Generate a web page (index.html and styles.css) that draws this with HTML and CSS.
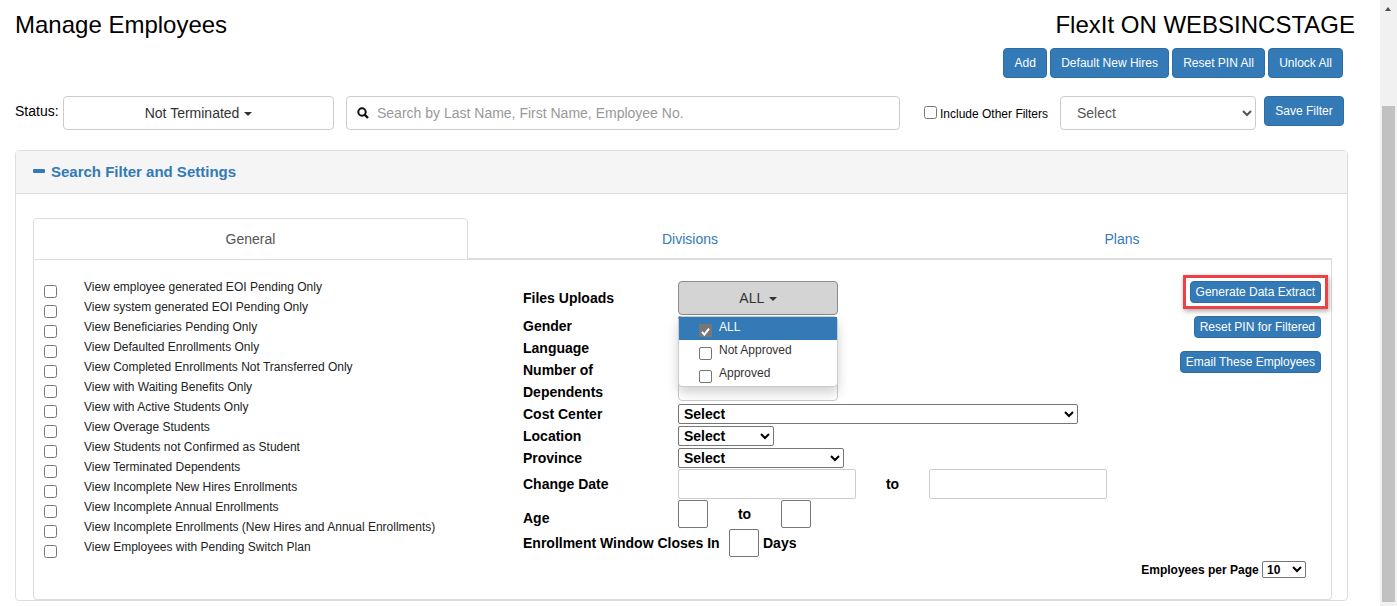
FILE: index.html
```html
<!DOCTYPE html>
<html lang="en">
<head>
    <meta charset="UTF-8">
    <title>Manage Employees</title>
    <link rel="stylesheet" href="styles.css">
</head>
<body>
    <div class="page">
        <div class="container">
            <div class="title-row">
                <h1>Manage Employees</h1>
                <h1>FlexIt ON WEBSINCSTAGE</h1>
            </div>
            <div class="action-row">
                <button class="btn">Add</button>
                <button class="btn">Default New Hires</button>
                <button class="btn">Reset PIN All</button>
                <button class="btn">Unlock All</button>
            </div>
            <div class="filter-row">
                <label class="status-label">Status:</label>
                <div class="status-toggle">Not Terminated <span class="caret"></span></div>
                <div class="search-box">
                    <svg class="search-icon" width="12" height="12" viewBox="0 0 12 12">
                        <circle cx="5" cy="5" r="3.7" fill="none" stroke="#111" stroke-width="2"/>
                        <path d="M7.6 7.6 L11 11" stroke="#111" stroke-width="2.4"/>
                    </svg>
                    <input class="search-input" type="text" placeholder="Search by Last Name, First Name, Employee No.">
                </div>
                <label class="include-label"><input type="checkbox"><span>Include Other Filters</span></label>
                <select class="saved-select"><option>Select</option></select>
                <button class="btn btn-save">Save Filter</button>
            </div>

            <div class="panel">
                <div class="panel-heading"><span class="minus"></span>Search Filter and Settings</div>
                <div class="panel-body">
                    <div class="tabs">
                        <div class="tab active">General</div>
                        <div class="tab">Divisions</div>
                        <div class="tab">Plans</div>
                    </div>
                    <div class="tab-content">
                        <div class="check-list">
                            <label class="check-row"><input type="checkbox"><span>View employee generated EOI Pending Only</span></label>
                            <label class="check-row"><input type="checkbox"><span>View system generated EOI Pending Only</span></label>
                            <label class="check-row"><input type="checkbox"><span>View Beneficiaries Pending Only</span></label>
                            <label class="check-row"><input type="checkbox"><span>View Defaulted Enrollments Only</span></label>
                            <label class="check-row"><input type="checkbox"><span>View Completed Enrollments Not Transferred Only</span></label>
                            <label class="check-row"><input type="checkbox"><span>View with Waiting Benefits Only</span></label>
                            <label class="check-row"><input type="checkbox"><span>View with Active Students Only</span></label>
                            <label class="check-row"><input type="checkbox"><span>View Overage Students</span></label>
                            <label class="check-row"><input type="checkbox"><span>View Students not Confirmed as Student</span></label>
                            <label class="check-row"><input type="checkbox"><span>View Terminated Dependents</span></label>
                            <label class="check-row"><input type="checkbox"><span>View Incomplete New Hires Enrollments</span></label>
                            <label class="check-row"><input type="checkbox"><span>View Incomplete Annual Enrollments</span></label>
                            <label class="check-row"><input type="checkbox"><span>View Incomplete Enrollments (New Hires and Annual Enrollments)</span></label>
                            <label class="check-row"><input type="checkbox"><span>View Employees with Pending Switch Plan</span></label>
                        </div>

                        <div class="form-col">
                            <div class="form-row row-files">
                                <span class="form-label">Files Uploads</span>
                                <div class="files-toggle">ALL <span class="caret"></span></div>
                                <div class="files-menu">
                                    <div class="menu-item selected"><span class="menu-check">
                                        <svg width="13" height="13" viewBox="0 0 13 13"><path d="M3 6.8 L5.4 9.6 L10 3.6" fill="none" stroke="#fff" stroke-width="2"/></svg>
                                    </span>ALL</div>
                                    <div class="menu-item"><span class="menu-check"></span>Not Approved</div>
                                    <div class="menu-item"><span class="menu-check"></span>Approved</div>
                                </div>
                            </div>
                            <div class="form-row"><span class="form-label">Gender</span><select class="small-select sel-short"><option>Select</option></select></div>
                            <div class="form-row"><span class="form-label">Language</span><select class="small-select sel-short"><option>Select</option></select></div>
                            <div class="form-row row-tall">
                                <span class="form-label">Number of<br>Dependents</span>
                                <input class="light-input dep-input" type="text">
                            </div>
                            <div class="form-row"><span class="form-label">Cost Center</span><select class="small-select sel-cost"><option>Select</option></select></div>
                            <div class="form-row"><span class="form-label">Location</span><select class="small-select sel-short"><option>Select</option></select></div>
                            <div class="form-row"><span class="form-label">Province</span><select class="small-select sel-prov"><option>Select</option></select></div>
                            <div class="form-row row-date">
                                <span class="form-label">Change Date</span>
                                <input class="light-input date-input" type="text">
                                <span class="to-date">to</span>
                                <input class="light-input date-input" type="text">
                            </div>
                            <div class="form-row row-age">
                                <span class="form-label age-label">Age</span>
                                <input class="box-input" type="text">
                                <span class="to-age">to</span>
                                <input class="box-input" type="text">
                            </div>
                            <div class="form-row row-window">
                                <span class="window-label">Enrollment Window Closes In</span>
                                <input class="box-input" type="text">
                                <span class="days">Days</span>
                            </div>
                        </div>

                        <div class="side-col">
                            <button class="btn btn-side highlight">Generate Data Extract</button>
                            <button class="btn btn-side">Reset PIN for Filtered</button>
                            <button class="btn btn-side">Email These Employees</button>
                            <div class="per-page">Employees per Page
                                <select class="page-select"><option>10</option></select>
                            </div>
                        </div>
                    </div>
                </div>
            </div>
        </div>

        <div class="scrollbar">
            <div class="scroll-arrow"></div>
            <div class="scroll-thumb"></div>
        </div>
    </div>
</body>
</html>
```

FILE: styles.css
```css
html, body {
    margin: 0;
    height: 606px;
    overflow: hidden;
}
body {
    font-family: "Liberation Sans", Arial, sans-serif;
    font-size: 14px;
    color: #000;
    background: #fff;
}
.page {
    display: flex;
    height: 606px;
}
.container {
    width: 1380px;
    flex: none;
    box-sizing: border-box;
    padding-left: 15px;
    overflow: hidden;
}
.title-row {
    display: flex;
    justify-content: space-between;
    height: 48px;
    padding-right: 25px;
}
h1 {
    margin: 0;
    font-size: 24px;
    font-weight: normal;
    line-height: 50px;
}
.btn {
    background: #337ab7;
    border: 1px solid #2e6da4;
    border-radius: 4px;
    color: #fff;
    font-family: inherit;
    font-size: 12px;
    padding: 0 10px;
    cursor: pointer;
}
.action-row {
    display: flex;
    justify-content: flex-end;
    gap: 3px;
    height: 30px;
    padding-right: 37px;
}
.action-row .btn {
    padding: 0 10.15px;
}
.filter-row {
    display: flex;
    align-items: flex-start;
    height: 34px;
    margin-top: 18px;
}
.status-label {
    width: 48px;
    line-height: 30px;
}
.status-toggle {
    width: 271px;
    height: 34px;
    box-sizing: border-box;
    border: 1px solid #ccc;
    border-radius: 4px;
    text-align: center;
    line-height: 33px;
    color: #333;
}
.caret {
    display: inline-block;
    width: 0;
    height: 0;
    margin-left: 1px;
    vertical-align: middle;
    border-top: 4px solid #333;
    border-left: 4px solid transparent;
    border-right: 4px solid transparent;
}
.search-box {
    display: flex;
    align-items: center;
    width: 554px;
    height: 34px;
    box-sizing: border-box;
    margin-left: 12px;
    padding-left: 10px;
    border: 1px solid #ccc;
    border-radius: 4px;
}
.search-input {
    flex: 1;
    margin-left: 8px;
    border: none;
    outline: none;
    font-family: inherit;
    font-size: 14px;
    padding: 0;
}
.search-input::placeholder {
    color: #999;
}
.include-label {
    display: flex;
    align-items: flex-start;
    width: 136px;
    margin-left: 24px;
    font-size: 12px;
    color: #000;
}
.include-label input {
    margin: 10px 3px 0 0;
}
.include-label span {
    margin-top: 11px;
}
.saved-select {
    width: 196px;
    height: 34px;
    padding: 0 12px;
    background: #fff;
    border: 1px solid #ccc;
    border-radius: 4px;
    color: #555;
    font-family: inherit;
    font-size: 14px;
}
.btn-save {
    width: 80px;
    height: 30px;
    margin-left: 8px;
    padding: 0;
}
.panel {
    width: 1333px;
    box-sizing: border-box;
    margin-top: 20px;
    border: 1px solid #ddd;
    border-radius: 4px;
}
.panel-heading {
    display: flex;
    align-items: center;
    height: 40px;
    padding: 0 0 2px 17px;
    background: #f5f5f5;
    border-bottom: 1px solid #ddd;
    color: #337ab7;
    font-size: 15px;
    font-weight: bold;
}
.minus {
    width: 12px;
    height: 4px;
    margin-right: 6px;
    background: #337ab7;
    border-radius: 1px;
}
.panel-body {
    padding: 24px 15px 0 17px;
}
.tabs {
    display: grid;
    grid-template-columns: 435px 444px 420px;
    height: 42px;
}
.tab {
    box-sizing: border-box;
    padding-top: 13px;
    text-align: center;
    color: #337ab7;
    border-bottom: 2px solid #ddd;
}
.tab.active {
    color: #555;
    border: 1px solid #ddd;
    border-radius: 4px 4px 0 0;
    padding-top: 12px;
}
.tab-content {
    display: flex;
    height: 340px;
    box-sizing: border-box;
    padding: 17px 10px 21px;
    border: 1px solid #ddd;
    border-top: none;
    border-radius: 0 0 4px 4px;
}
.check-list {
    width: 479px;
    flex: none;
}
.check-row {
    display: flex;
    align-items: flex-start;
    height: 20px;
    font-size: 12px;
    line-height: 20px;
    color: #222;
}
.check-row input {
    flex: none;
    margin: 8px 27px 0 0;
}
.form-col {
    width: 600px;
    flex: none;
    padding-top: 4px;
}
.form-row {
    position: relative;
    display: flex;
    align-items: center;
    height: 22px;
    font-weight: bold;
}
.form-label {
    width: 155px;
    flex: none;
    line-height: 22px;
}
.row-files {
    height: 34px;
}
.row-tall {
    height: 44px;
}
.row-date {
    height: 30px;
}
.row-age {
    height: 30px;
}
.row-window {
    height: 28px;
}
.files-toggle {
    width: 160px;
    height: 34px;
    box-sizing: border-box;
    background: #d4d4d4;
    border: 1px solid #8c8c8c;
    border-radius: 4px;
    text-align: center;
    line-height: 32px;
    font-weight: normal;
    color: #333;
}
.files-menu {
    position: absolute;
    top: 35px;
    left: 155px;
    z-index: 5;
    width: 160px;
    height: 71px;
    box-sizing: border-box;
    background: #fff;
    border: 1px solid #ccc;
    border-radius: 4px;
    box-shadow: 0 6px 12px rgba(0, 0, 0, 0.175);
    font-weight: normal;
    font-size: 12px;
}
.menu-item {
    display: flex;
    align-items: flex-start;
    height: 23px;
    padding-left: 20px;
    line-height: 21px;
    color: #333;
}
.menu-item.selected {
    background: #337ab7;
    color: #fff;
}
.menu-check {
    width: 13px;
    height: 13px;
    box-sizing: border-box;
    margin: 7px 7px 0 0;
    background: #fff;
    border: 1px solid #767676;
    border-radius: 2px;
}
.selected .menu-check {
    background: #777;
    border: none;
    border-radius: 0;
}
.small-select {
    height: 20px;
    padding-left: 1px;
    background: #fff;
    border: 1px solid #767676;
    border-radius: 2px;
    font-family: inherit;
    font-size: 14px;
    font-weight: bold;
    color: #000;
}
.sel-short {
    width: 96px;
}
.sel-cost {
    width: 400px;
}
.sel-prov {
    width: 166px;
}
.light-input {
    box-sizing: border-box;
    border: 1px solid #ccc;
    border-radius: 2px;
    background: #fff;
}
.dep-input {
    width: 160px;
    height: 28px;
    margin-top: 12px;
    border-radius: 4px;
}
.date-input {
    width: 178px;
    height: 30px;
}
.to-date {
    width: 73px;
    text-align: center;
}
.box-input {
    width: 30px;
    height: 28px;
    box-sizing: border-box;
    background: #fff;
    border: 1px solid #767676;
    border-radius: 2px;
}
.age-label {
    margin-top: 8px;
}
.to-age {
    width: 73px;
    text-align: center;
}
.window-label {
    width: 206px;
    flex: none;
}
.days {
    margin-left: 4px;
}
.side-col {
    flex: 1;
    display: flex;
    flex-direction: column;
    align-items: flex-end;
    padding-top: 4px;
}
.btn-side {
    height: 22px;
    padding: 0 5px;
    margin-bottom: 13px;
}
.highlight {
    position: relative;
}
.highlight::after {
    content: "";
    position: absolute;
    top: -7px;
    right: -8px;
    bottom: -7px;
    left: -8px;
    border: 3px solid #ee4045;
    box-shadow: 1px 2px 5px rgba(0, 0, 0, 0.35);
}
.per-page {
    margin-top: auto;
    margin-right: 15px;
    font-size: 12px;
    font-weight: bold;
    white-space: nowrap;
}
.page-select {
    width: 44px;
    height: 17px;
    background: #fff;
    border: 1px solid #767676;
    border-radius: 2px;
    font-family: inherit;
    font-size: 12px;
    font-weight: bold;
}
.scrollbar {
    width: 17px;
    flex: none;
    background: #f1f1f1;
}
.scroll-arrow {
    width: 0;
    height: 0;
    margin: 7px 0 0 5px;
    border-bottom: 4px solid #505050;
    border-left: 3.5px solid transparent;
    border-right: 3.5px solid transparent;
}
.scroll-thumb {
    width: 13px;
    height: 496px;
    margin: 95px 0 0 2px;
    background: #c1c1c1;
}
```
